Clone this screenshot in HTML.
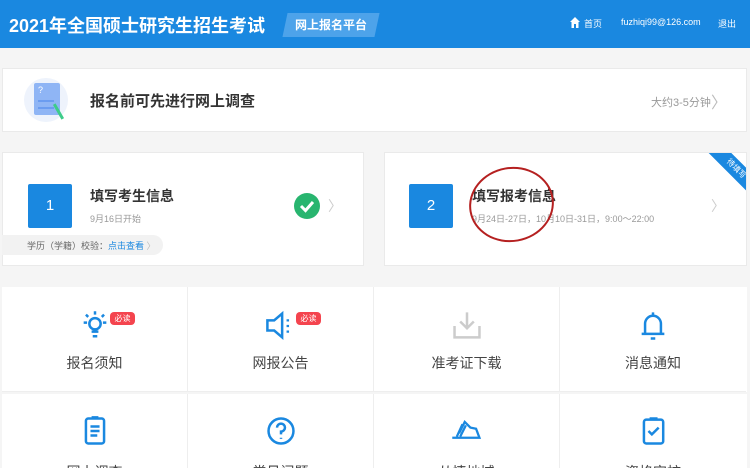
<!DOCTYPE html>
<html><head><meta charset="utf-8"><style>
*{margin:0;padding:0;box-sizing:border-box}
html,body{width:750px;height:468px;overflow:hidden}
body{background:#f5f5f5;font-family:"Liberation Sans","Noto Sans CJK SC",sans-serif;position:relative}
.hd{position:absolute;left:0;top:0;width:750px;height:48px;background:#1a88e0;color:#fff}
.abs{position:absolute}
.card{position:absolute;background:#fff;border:1px solid #eaeaea}
.box{position:absolute;width:44px;height:44px;background:#1a88e0;color:#fff;font-size:15px;text-align:center;line-height:44px;border-radius:2px}
.cell{position:absolute;width:186px;height:105px;background:#fff;border-right:1px solid #eee;border-bottom:1px solid #eee;text-align:center}
.cell .lb{position:absolute;left:0;right:0;top:66px;font-size:14px;color:#444}
.cell svg{position:absolute;left:76px;top:22px}
.bd{position:absolute;background:#f4444e;color:#fff;font-size:8px;border-radius:4px;width:25px;height:13px;line-height:13px;text-align:center}
</style></head><body>
<div class="hd">
<div class="abs" style="left:9px;top:12px;font-size:18px;font-weight:bold">2021年全国硕士研究生招生考试</div>
<div class="abs" style="left:285px;top:13px;width:92px;height:24px;background:#4da3ea;transform:skewX(-12deg)"></div>
<div class="abs" style="left:295px;top:16px;font-size:12px;font-weight:bold">网上报名平台</div>
<svg class="abs" style="left:570px;top:17px" width="10" height="11"><path d="M5 0L0 5H1.5V11H4V7H6V11H8.5V5H10Z" fill="#fff"/></svg>
<div class="abs" style="left:584px;top:17px;font-size:9px">首页</div>
<div class="abs" style="left:621px;top:17px;font-size:9px">fuzhiqi99@126.com</div>
<div class="abs" style="left:718px;top:17px;font-size:9px">退出</div>
</div>
<div class="card" style="left:2px;top:68px;width:745px;height:64px"></div>
<div class="abs" style="left:24px;top:78px;width:44px;height:44px;border-radius:50%;background:#eef3fc"></div>
<div class="abs" style="left:34px;top:83px;width:26px;height:32px;background:#8fb5f5;border-radius:2px"></div>
<div class="abs" style="left:38px;top:85px;font-size:9px;color:#fff">?</div>
<div class="abs" style="left:38px;top:100px;width:16px;height:2px;background:#6b9cf0"></div>
<div class="abs" style="left:38px;top:107px;width:16px;height:2px;background:#6b9cf0"></div>
<div class="abs" style="left:57px;top:103px;width:3px;height:17px;background:#3dcc8a;transform:rotate(-30deg)"></div>
<div class="abs" style="left:90px;top:90px;font-size:15px;font-weight:bold;color:#333">报名前可先进行网上调查</div>
<div class="abs" style="left:651px;top:94px;font-size:11px;color:#999">大约3-5分钟</div>
<div class="abs" style="left:711px;top:89px;font-size:16px;color:#bbb">〉</div>

<div class="card" style="left:2px;top:152px;width:362px;height:114px"></div>
<div class="box" style="left:28px;top:184px">1</div>
<div class="abs" style="left:90px;top:186px;font-size:14px;font-weight:bold;color:#333">填写考生信息</div>
<div class="abs" style="left:90px;top:212px;font-size:9px;color:#999">9月16日开始</div>
<div class="abs" style="left:294px;top:193px;width:26px;height:26px;border-radius:50%;background:#28b56f"></div>
<svg class="abs" style="left:294px;top:193px" width="26" height="26"><path d="M7 13L11.5 17.5L19 9" stroke="#fff" stroke-width="3" fill="none"/></svg>
<div class="abs" style="left:328px;top:196px;font-size:14px;color:#ccc">〉</div>
<div class="abs" style="left:2px;top:235px;width:161px;height:20px;background:#f2f2f2;border-radius:0 10px 10px 0"></div>
<div class="abs" style="left:27px;top:239px;font-size:9px;color:#666">学历（学籍）校验：<span style="color:#1a88e0">点击查看</span> <span style="color:#bbb">〉</span></div>

<div class="card" style="left:384px;top:152px;width:363px;height:114px;overflow:hidden"><div class="abs" style="left:316px;top:8px;width:70px;height:16px;background:#1a88e0;transform:rotate(45deg);color:#fff;font-size:8px;text-align:center;line-height:16px">待填写</div></div>
<div class="box" style="left:409px;top:184px">2</div>
<div class="abs" style="left:472px;top:186px;font-size:14px;font-weight:bold;color:#333">填写报考信息</div>
<div class="abs" style="left:472px;top:212px;font-size:9px;color:#999">9月24日-27日，10月10日-31日，9:00～22:00</div>
<div class="abs" style="left:711px;top:196px;font-size:14px;color:#ccc">〉</div>
<div class="abs" style="left:469px;top:167px;width:85px;height:75px;border:2px solid #b52020;border-radius:50%;transform:rotate(-10deg)"></div>

<div class="abs" style="left:2px;top:287px;width:745px;height:181px;background:#fff"></div>
<div class="cell" style="left:2px;top:287px"><svg width="34" height="34" viewBox="0 0 30 30" fill="none" stroke="#1a88e0" stroke-width="2.2"><circle cx="15" cy="13" r="5"/><path d="M12 20H18M13 24H17M15 2V5M5 12H8M22 12H25M7 5L9 7M23 5L21 7"/></svg><div class="bd" style="left:108px;top:25px">必读</div><div class="lb">报名须知</div></div>
<div class="cell" style="left:188px;top:287px"><svg width="34" height="34" viewBox="0 0 30 30" fill="none" stroke="#1a88e0" stroke-width="2.2"><path d="M3 10H9L16 4V25L9 19H3Z"/><path d="M21 9V11M21 14V16M21 19V21" /></svg><div class="bd" style="left:108px;top:25px">必读</div><div class="lb">网报公告</div></div>
<div class="cell" style="left:374px;top:287px"><svg width="34" height="34" viewBox="0 0 30 30" fill="none" stroke="#ccc" stroke-width="2.2"><path d="M15 3V17M9 11L15 17L21 11M4 15V25H26V15"/></svg><div class="lb">准考证下载</div></div>
<div class="cell" style="left:560px;top:287px;border-right:none"><svg width="34" height="34" viewBox="0 0 30 30" fill="none" stroke="#1a88e0" stroke-width="2.2"><path d="M8 22V13A7 7 0 0 1 22 13V22H25H5ZM15 3V6M13 26H17"/></svg><div class="lb">消息通知</div></div>
<div class="abs" style="left:2px;top:392px;width:745px;height:2px;background:#f5f5f5"></div>
<div class="cell" style="left:2px;top:394px;height:74px;border-bottom:none"><svg width="34" height="34" style="top:20px" viewBox="0 0 30 30" fill="none" stroke="#1a88e0" stroke-width="2.2"><rect x="7" y="4" width="16" height="22" rx="2"/><path d="M11 11H19M11 15H19M11 19H17M12 3H18"/></svg><div class="lb" style="top:68px">网上调查</div></div>
<div class="cell" style="left:188px;top:394px;height:74px;border-bottom:none"><svg width="34" height="34" style="top:20px" viewBox="0 0 30 30" fill="none" stroke="#1a88e0" stroke-width="2.2"><circle cx="15" cy="15" r="11"/><path d="M11.5 12A3.5 3.5 0 1 1 15 15.5V18M15 21V22"/></svg><div class="lb" style="top:68px">常见问题</div></div>
<div class="cell" style="left:374px;top:394px;height:74px;border-bottom:none"><svg width="34" height="34" style="top:20px" viewBox="0 0 30 30" fill="none" stroke="#1a88e0" stroke-width="2"><path d="M2 21H26L23 13L18 12L13 7L8 17M6 20L11 9M9 20L14 10"/></svg><div class="lb" style="top:68px">从情地域</div></div>
<div class="cell" style="left:560px;top:394px;height:74px;border-right:none;border-bottom:none"><svg width="34" height="34" style="top:20px" viewBox="0 0 30 30" fill="none" stroke="#1a88e0" stroke-width="2.2"><rect x="7" y="5" width="17" height="21" rx="2"/><path d="M12 4H19M11 15L14 18L20 12"/></svg><div class="lb" style="top:68px">资格审核</div></div>
</body></html>
